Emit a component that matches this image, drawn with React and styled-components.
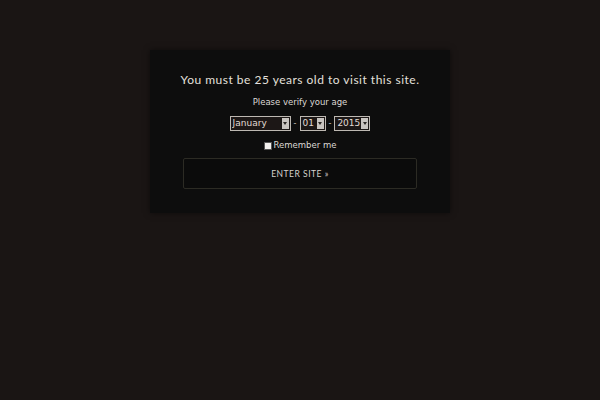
import styled, {createGlobalStyle} from 'styled-components';

const GlobalStyle = createGlobalStyle`
    html, body {
        margin: 0;
        padding: 0;
        background-color: #1a1514;
    }

    body {
        font-family: "DejaVu Sans", sans-serif;
    }
`

const Page = styled.div`
    width: 600px;
    height: 400px;
    display: flex;
    justify-content: center;
    align-items: flex-start;
    padding-top: 50px;
    box-sizing: border-box;
`

const Modal = styled.div`
    width: 300px;
    height: 163px;
    box-sizing: border-box;
    padding: 22px 33px 0;
    display: flex;
    flex-direction: column;
    align-items: center;
    background-color: #0d0d0d;
    box-shadow: 0 0 6px rgba(0, 0, 0, 0.5);
`

const Title = styled.h1`
    margin: 0;
    font-family: "Lato", sans-serif;
    font-weight: 400;
    font-size: 12px;
    letter-spacing: 0.5px;
    line-height: 16px;
    color: #e4e0dc;
    white-space: nowrap;
`

const Subtitle = styled.p`
    margin: 8px 0 0;
    font-size: 8.5px;
    line-height: 12px;
    color: #dcd8d4;
`

const DateRow = styled.div`
    margin-top: 8px;
    display: flex;
    align-items: center;
    gap: 3px;
    color: #cfcac4;
    font-size: 8px;
`

const SelectBox = styled.div`
    display: flex;
    align-items: stretch;
    width: ${p => p.$width}px;
    height: 15px;
    box-sizing: border-box;
    border: 1px solid #bdb8b2;
    background-color: #1c1716;
    padding: 1px;
`

const SelectValue = styled.span`
    flex: 1;
    padding-left: 1px;
    font-size: 9px;
    line-height: 11px;
    color: #e0dbd5;
    overflow: hidden;
    white-space: nowrap;
`

const SelectArrow = styled.span`
    width: 7px;
    flex-shrink: 0;
    display: flex;
    align-items: center;
    justify-content: center;
    background-color: #c8c4c0;

    &::after {
        content: '';
        border-left: 2px solid transparent;
        border-right: 2px solid transparent;
        border-top: 3px solid #2a2624;
    }
`

function Select({value, width}) {
    return (
        <SelectBox $width={width}>
            <SelectValue>{value}</SelectValue>
            <SelectArrow/>
        </SelectBox>
    )
}

const RememberRow = styled.label`
    margin-top: 8px;
    display: flex;
    align-items: center;
    gap: 2px;
    font-size: 8.5px;
    line-height: 12px;
    color: #dcd8d4;
`

const CheckBox = styled.span`
    width: 6px;
    height: 6px;
    margin-top: 1px;
    background-color: #f2f0ee;
    border: 1px solid #555;
`

const EnterButton = styled.button`
    margin-top: 7px;
    width: 234px;
    height: 31px;
    background-color: #0b0b0b;
    border: 1px solid #2c2b24;
    border-radius: 2px;
    font-family: "Lato", sans-serif;
    font-size: 8.5px;
    letter-spacing: 0.5px;
    color: #d6d2cd;
    cursor: pointer;
`

export default function App() {
    return (
        <Page>
            <GlobalStyle/>
            <Modal>
                <Title>You must be 25 years old to visit this site.</Title>
                <Subtitle>Please verify your age</Subtitle>
                <DateRow>
                    <Select value="January" width={61}/>
                    -
                    <Select value="01" width={26}/>
                    -
                    <Select value="2015" width={36}/>
                </DateRow>
                <RememberRow>
                    <CheckBox/>
                    Remember me
                </RememberRow>
                <EnterButton>ENTER SITE »</EnterButton>
            </Modal>
        </Page>
    )
};
